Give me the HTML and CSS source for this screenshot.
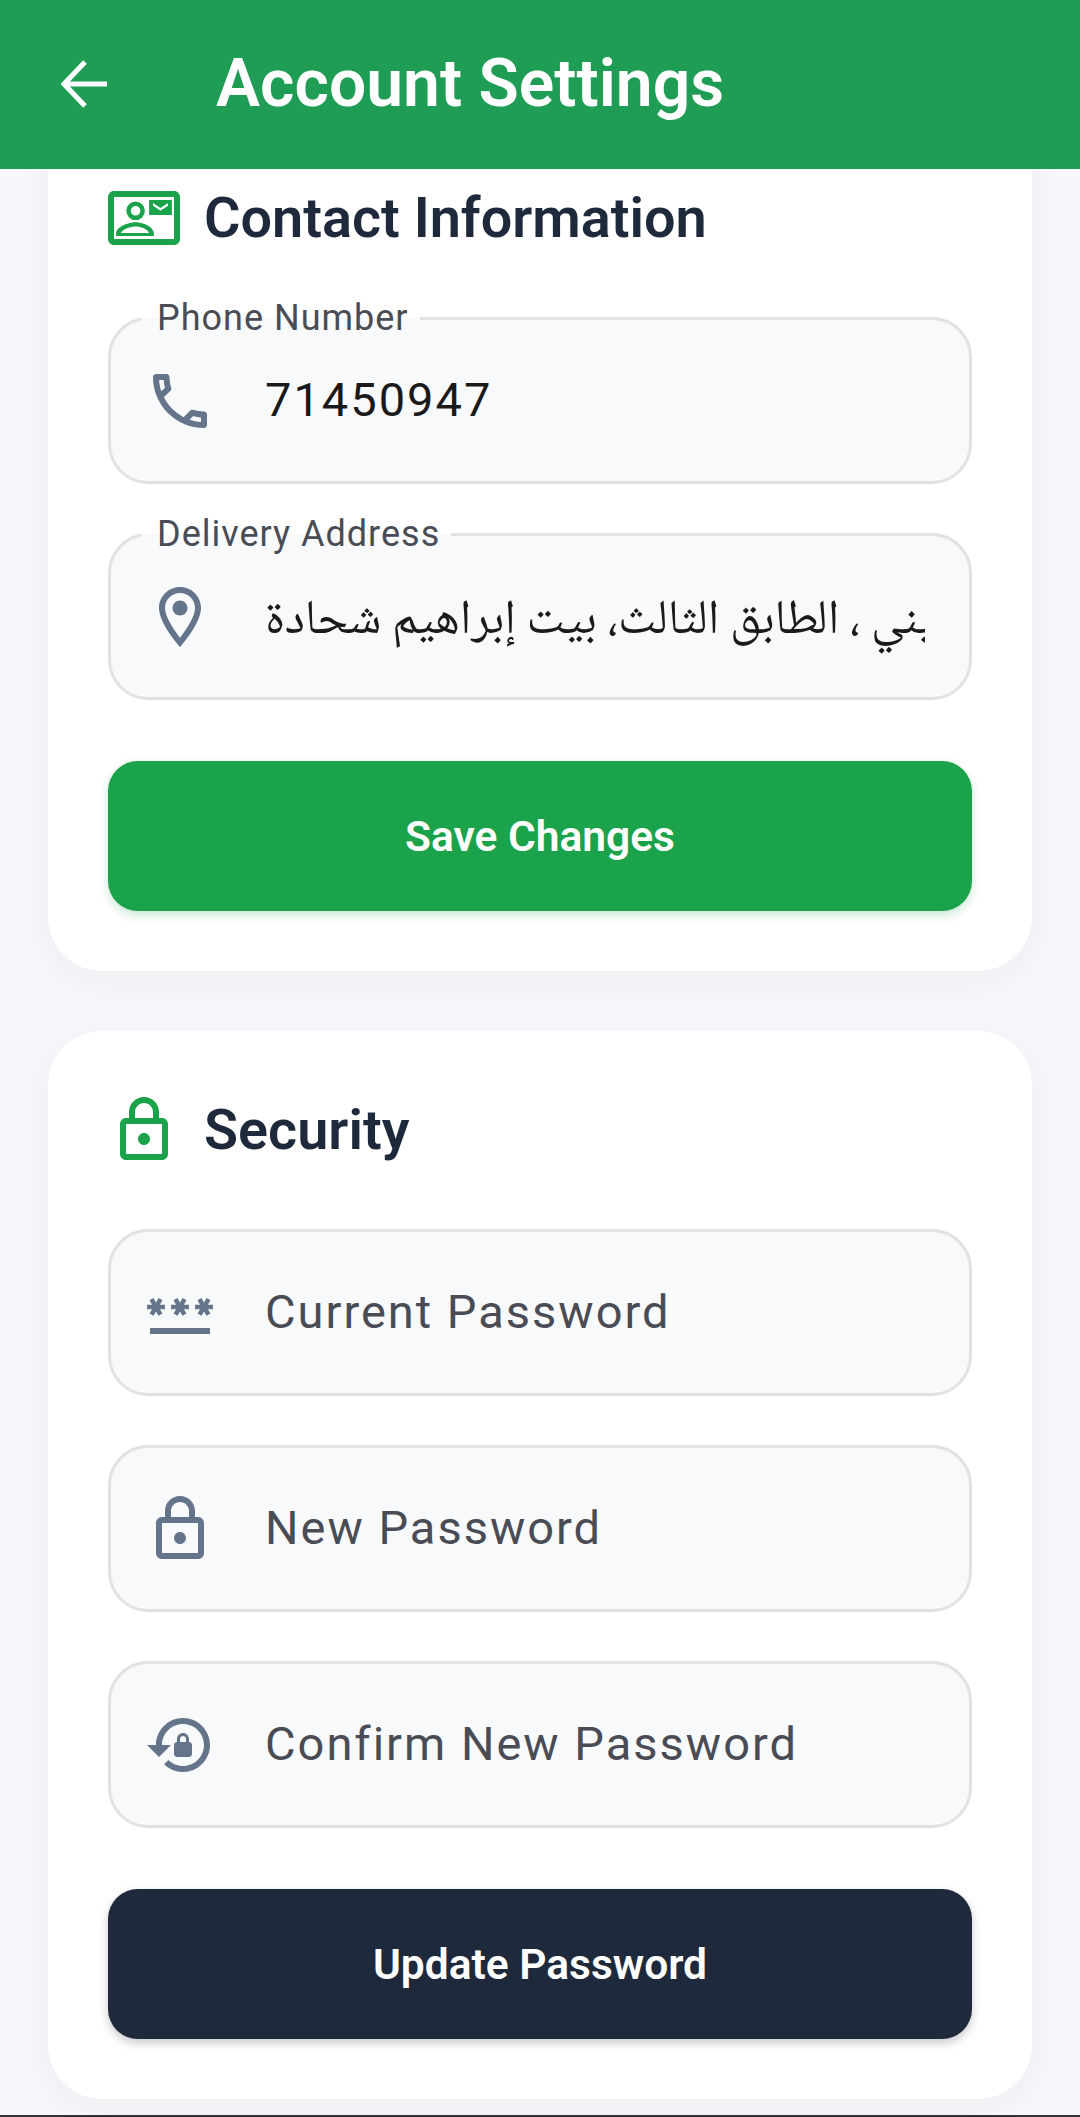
FILE: index.html
```html
<!DOCTYPE html>
<html lang="en">
<head>
<meta charset="utf-8">
<title>Account Settings</title>
<link rel="stylesheet" href="styles.css">
</head>
<body>
<div class="screen">
  <header class="appbar">
    <svg class="back" viewBox="0 0 48 48"><path d="M46 24H4M24 2 3 24l21 22"/></svg>
    <h1 class="appbar-title">Account Settings</h1>
  </header>
  <main class="content">
    <section class="card card-first">
      <div class="card-head">
        <svg class="icon icon-green" viewBox="0 0 24 24"><path fill-rule="evenodd" d="M22 3H2C.9 3 0 3.9 0 5v14c0 1.1.9 2 2 2h20c1.1 0 2-.9 2-2V5c0-1.1-.9-2-2-2zm0 16H2V5h20v14z"/><path fill-rule="evenodd" d="M13.7 6h7.6v5h-7.6zM15 7v.9l2.5 1.7L20 7.900V7l-2.500 1.700z"/><path fill-rule="evenodd" d="M9.200 6.500a3.100 3.100 0 1 0 0 6.200 3.100 3.100 0 0 0 0-6.200zm0 1.500a1.600 1.600 0 1 1 0 3.200 1.600 1.600 0 0 1 0-3.200zM2.700 18v-.8c0-2.400 4.300-3.800 6.500-3.800s6.100 1.400 6.100 3.800v.8zm1.600-1h9.400c-.3-1.300-2.900-2.200-4.500-2.200s-4.500.9-4.900 2.200z"/></svg>
        <h2 class="card-title">Contact Information</h2>
      </div>
      <div class="fields">
        <div class="field">
          <span class="field-label">Phone Number</span>
          <svg class="icon icon-slate" viewBox="0 0 24 24"><path d="M6.540 5c.06.89.21 1.760.45 2.590l-1.200 1.200c-.41-1.200-.67-2.470-.76-3.790h1.510m9.860 12.020c.85.24 1.720.39 2.600.45v1.490c-1.320-.09-2.590-.35-3.800-.75l1.200-1.190M7.500 3H4c-.55 0-1 .45-1 1 0 9.390 7.610 17 17 17 .55 0 1-.45 1-1v-3.490c0-.55-.45-1-1-1-1.240 0-2.450-.2-3.570-.57-.1-.04-.21-.05-.31-.05-.26 0-.51.1-.71.29l-2.200 2.200c-2.830-1.450-5.150-3.760-6.590-6.590l2.200-2.200c.28-.28.36-.67.25-1.020C8.700 6.450 8.500 5.250 8.500 4c0-.55-.45-1-1-1z"/></svg>
          <span class="field-value">71450947</span>
        </div>
        <div class="field">
          <span class="field-label">Delivery Address</span>
          <svg class="icon icon-slate" viewBox="0 0 24 24"><path d="M12 2C8.130 2 5 5.130 5 9c0 5.250 7 13 7 13s7-7.750 7-13c0-3.870-3.130-7-7-7zM7 9c0-2.760 2.240-5 5-5s5 2.240 5 5c0 2.880-2.880 7.190-5 9.880C9.920 16.210 7 11.850 7 9z"/><circle cx="12" cy="9" r="2.500"/></svg>
          <span class="field-value field-value-ar"><bdi dir="rtl" lang="ar">الرملة، مبنى الحسيني ، الطابق الثالث، بيت إبراهيم شحادة</bdi></span>
        </div>
      </div>
      <button class="btn btn-green" type="button">Save Changes</button>
    </section>

    <section class="card">
      <div class="card-head">
        <svg class="icon icon-green" viewBox="0 0 24 24"><path d="M18 8h-1V6c0-2.760-2.240-5-5-5S7 3.240 7 6v2H6c-1.100 0-2 .9-2 2v10c0 1.100.9 2 2 2h12c1.100 0 2-.9 2-2V10c0-1.100-.9-2-2-2zM9 6c0-1.660 1.340-3 3-3s3 1.340 3 3v2H9V6zm9 14H6V10h12v10zm-6-3c1.100 0 2-.9 2-2s-.9-2-2-2-2 .9-2 2 .9 2 2 2z"/></svg>
        <h2 class="card-title">Security</h2>
      </div>
      <div class="fields">
        <div class="field">
          <svg class="icon icon-slate" viewBox="0 0 24 24"><path d="M2 17h20v2H2v-2zm1.150-4.050L4 11.470l.85 1.480 1.300-.75-.85-1.480H7v-1.500H5.300l.85-1.470L4.850 7 4 8.470 3.150 7l-1.300.75.85 1.470H1v1.500h1.700l-.85 1.480 1.300.75zm6.700-.75 1.300.75.85-1.480.85 1.480 1.300-.75-.85-1.480H15v-1.500h-1.700l.85-1.470-1.300-.75L12 8.470 11.150 7l-1.300.75.85 1.470H9v1.500h1.700l-.85 1.480zM23 9.220h-1.700l.85-1.470-1.300-.75L20 8.470 19.150 7l-1.300.75.85 1.470H17v1.500h1.700l-.85 1.480 1.300.75.85-1.480.85 1.480 1.300-.75-.85-1.480H23v-1.500z"/></svg>
          <span class="field-hint">Current Password</span>
        </div>
        <div class="field">
          <svg class="icon icon-slate" viewBox="0 0 24 24"><path d="M18 8h-1V6c0-2.760-2.240-5-5-5S7 3.240 7 6v2H6c-1.100 0-2 .9-2 2v10c0 1.100.9 2 2 2h12c1.100 0 2-.9 2-2V10c0-1.100-.9-2-2-2zM9 6c0-1.660 1.340-3 3-3s3 1.340 3 3v2H9V6zm9 14H6V10h12v10zm-6-3c1.100 0 2-.9 2-2s-.9-2-2-2-2 .9-2 2 .9 2 2 2z"/></svg>
          <span class="field-hint">New Password</span>
        </div>
        <div class="field">
          <svg class="icon icon-slate" viewBox="0 0 24 24"><path d="M13 3c-4.970 0-9 4.030-9 9H1l4 4 4-4H6c0-3.860 3.140-7 7-7s7 3.140 7 7-3.140 7-7 7c-1.900 0-3.620-.76-4.880-2.010L6.700 18.420C8.320 20.050 10.550 21 13 21c4.970 0 9-4.030 9-9s-4.030-9-9-9zm2 8v-1c0-1.100-.9-2-2-2s-2 .9-2 2v1c-.55 0-1 .45-1 1v3c0 .55.45 1 1 1h4c.55 0 1-.45 1-1v-3c0-.55-.45-1-1-1zm-1 0h-2v-1c0-.55.45-1 1-1s1 .45 1 1v1z"/></svg>
          <span class="field-hint">Confirm New Password</span>
        </div>
      </div>
      <button class="btn btn-dark" type="button">Update Password</button>
    </section>
  </main>
  <div class="edge"></div>
</div>
</body>
</html>
```
FILE: styles.css
```css
* { box-sizing: border-box; }
html, body { margin: 0; padding: 0; }
body { font-family: Roboto, "Noto Sans", sans-serif; background: #f6f8fb; }
.screen { width: 1080px; height: 2117px; display: flex; flex-direction: column; overflow: hidden; }
.appbar { flex: none; position: relative; z-index: 2; height: 169px; background: #1f9d55; display: flex; align-items: center; padding: 0 0 2px 61px; gap: 107px; }
.back { width: 48px; height: 48px; flex: none; fill: none; stroke: #fff; stroke-width: 5; }
.appbar-title { margin: 0; font-size: 66px; font-weight: 600; color: #fff; line-height: 1; }
.content { flex: 1; min-height: 0; padding: 0 48px; display: flex; flex-direction: column; gap: 60px; }
.card { background: #fff; border-radius: 54px; padding: 63px 60px 60px; box-shadow: 0 10px 40px rgba(30, 41, 59, .05); }
.card-first { margin-top: -50px; }
.card-head { display: flex; align-items: center; gap: 24px; margin-bottom: 63px; }
.card-title { margin: 0; font-size: 55.800px; font-weight: 600; color: #1e293b; line-height: 72px; }
.icon { width: 72px; height: 72px; flex: none; }
.icon-green { fill: #1aa34a; }
.icon-slate { fill: #64748b; }
.fields { display: flex; flex-direction: column; gap: 49px; margin-bottom: 61px; }
.field { position: relative; height: 167px; background: #f8f9fb; border: 3px solid #e0e2e5; border-radius: 40px; display: flex; align-items: center; padding: 0 33px; gap: 49px; }
.field-label { position: absolute; left: 31px; top: -23px; padding: 0 11px 0 15px; font-size: 36px; line-height: 42px; letter-spacing: 1px; color: #494c54; background: linear-gradient(#fff 50%, #f8f9fb 50%); }
.field-value { margin-bottom: 2px; font-size: 47px; letter-spacing: 2px; color: #1a1a1a; }
.field-value-ar { flex: 1; min-width: 0; margin: 12px 11px 0 0; overflow: hidden; white-space: nowrap; font-family: "Noto Naskh Arabic", "Noto Sans Arabic", "DejaVu Sans", sans-serif; font-size: 48.500px; letter-spacing: 0; }
.field-hint { margin-bottom: 2px; font-size: 47px; letter-spacing: 2px; color: #494c54; }
.btn { display: block; width: 100%; height: 150px; border: 0; border-radius: 30px; font-family: inherit; font-size: 42.500px; font-weight: 600; color: #fff; }
.btn-green { background: #1aa34a; box-shadow: 0 4px 10px rgba(26, 163, 74, .25); }
.btn-dark { background: #1e293b; box-shadow: 0 4px 10px rgba(30, 41, 59, .25); }
.edge { flex: none; height: 2px; background: #333; }
```
